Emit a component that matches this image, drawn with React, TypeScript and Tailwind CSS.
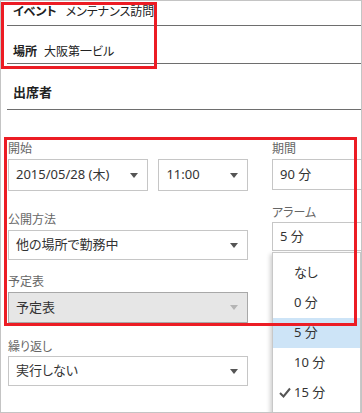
import React from "react";

const Caret = ({ light }: { light?: boolean }) => (
  <span
    className={`w-0 h-0 border-l-[4px] border-r-[4px] border-t-[5px] border-l-transparent border-r-transparent ${
      light ? "border-t-[#b4b4b4]" : "border-t-[#555]"
    }`}
  />
);

const Select = ({
  value,
  className,
  disabled,
}: {
  value: string;
  className: string;
  disabled?: boolean;
}) => (
  <div
    className={`flex items-center justify-between pl-[7px] pr-[9px] border text-[13px] text-[#333] ${
      disabled ? "bg-[#e6e6e6] border-[#a8a8a8]" : "bg-white border-[#c6c6c6]"
    } ${className}`}
  >
    <span>{value}</span>
    <Caret light={disabled} />
  </div>
);

const Label = ({ text }: { text: string }) => (
  <div className="h-[16px] leading-[16px] text-[12px] text-[#666]">{text}</div>
);

const App = () => {
  return (
    <main className="relative w-[362px] h-[413px] overflow-hidden bg-white border border-[#c4c4c4] font-['Noto_Sans','Noto_Sans_CJK_JP',sans-serif] [font-feature-settings:'palt']">
      {/* header */}
      <div className="pl-[6px]">
        <div className="h-[25px] flex items-end pb-[4px] pl-[6px] border-b border-[#6e6e6e] text-[12px] text-[#222]">
          <span className="font-bold mr-[9px]">イベント</span>
          <span>メンテナンス訪問</span>
        </div>
        <div className="h-[38px] flex items-end pb-[2px] pl-[6px] border-b border-[#6e6e6e] text-[12px] text-[#222]">
          <span className="font-bold mr-[7px]">場所</span>
          <span>大阪第一ビル</span>
        </div>
        <div className="h-[46px] flex items-end pb-[7px] pl-[6px] border-b border-[#6e6e6e] text-[13px] font-bold text-[#222]">
          出席者
        </div>
      </div>

      {/* form */}
      <div className="flex pl-[7px] pt-[31px]">
        <div className="w-[240px] flex flex-col">
          <Label text="開始" />
          <div className="flex gap-[10px] mt-[2px]">
            <Select value="2015/05/28 (木)" className="w-[141px] h-[32px]" />
            <Select value="11:00" className="w-[90px] h-[32px]" />
          </div>
          <div className="mt-[21px]">
            <Label text="公開方法" />
          </div>
          <Select value="他の場所で勤務中" className="w-[240px] h-[30px] mt-[2px]" />
          <div className="mt-[14px]">
            <Label text="予定表" />
          </div>
          <Select value="予定表" disabled className="w-[240px] h-[31px] mt-[2px]" />
          <div className="mt-[16px]">
            <Label text="繰り返し" />
          </div>
          <Select value="実行しない" className="w-[240px] h-[30px] mt-[1px]" />
        </div>

        <div className="ml-[24px] flex-1 flex flex-col">
          <Label text="期間" />
          <div className="mt-[2px] -mr-[2px] h-[31px] flex items-center pl-[7px] border border-[#c6c6c6] text-[13px] text-[#333]">
            90 分
          </div>
          <div className="mt-[15px]">
            <Label text="アラーム" />
          </div>
          <div className="mt-[1px] -mr-[2px] h-[29px] flex items-center pl-[7px] border border-[#c6c6c6] text-[13px] text-[#333]">
            5 分
          </div>
        </div>
      </div>

      {/* alarm dropdown */}
      <div className="absolute left-[271px] top-[251px] w-[89px] h-[170px] bg-white border border-[#c8c8c8] shadow-[-2px_2px_4px_rgba(0,0,0,0.18)] pt-[5px] text-[13px] text-[#333]">
        {["なし", "0 分", "5 分", "10 分", "15 分"].map((item, i) => (
          <div
            key={item}
            className={`h-[30px] flex items-center pl-[21px] relative ${
              i === 2 ? "bg-[#cde4f7]" : ""
            }`}
          >
            {i === 4 && (
              <svg
                className="absolute left-[6px] top-[9px]"
                width="12"
                height="11"
                viewBox="0 0 12 11"
              >
                <path d="M1 6 L4.5 9.5 L11 1.5" fill="none" stroke="#555" strokeWidth="2" />
              </svg>
            )}
            {item}
          </div>
        ))}
      </div>

      {/* red annotation frames */}
      <div className="absolute left-[0px] top-[1px] w-[156px] h-[67px] border-[3px] border-[#ec1c24]" />
      <div className="absolute left-[3px] top-[136px] w-[353px] h-[189px] border-[3px] border-[#ec1c24]" />
    </main>
  );
};

export default App;
